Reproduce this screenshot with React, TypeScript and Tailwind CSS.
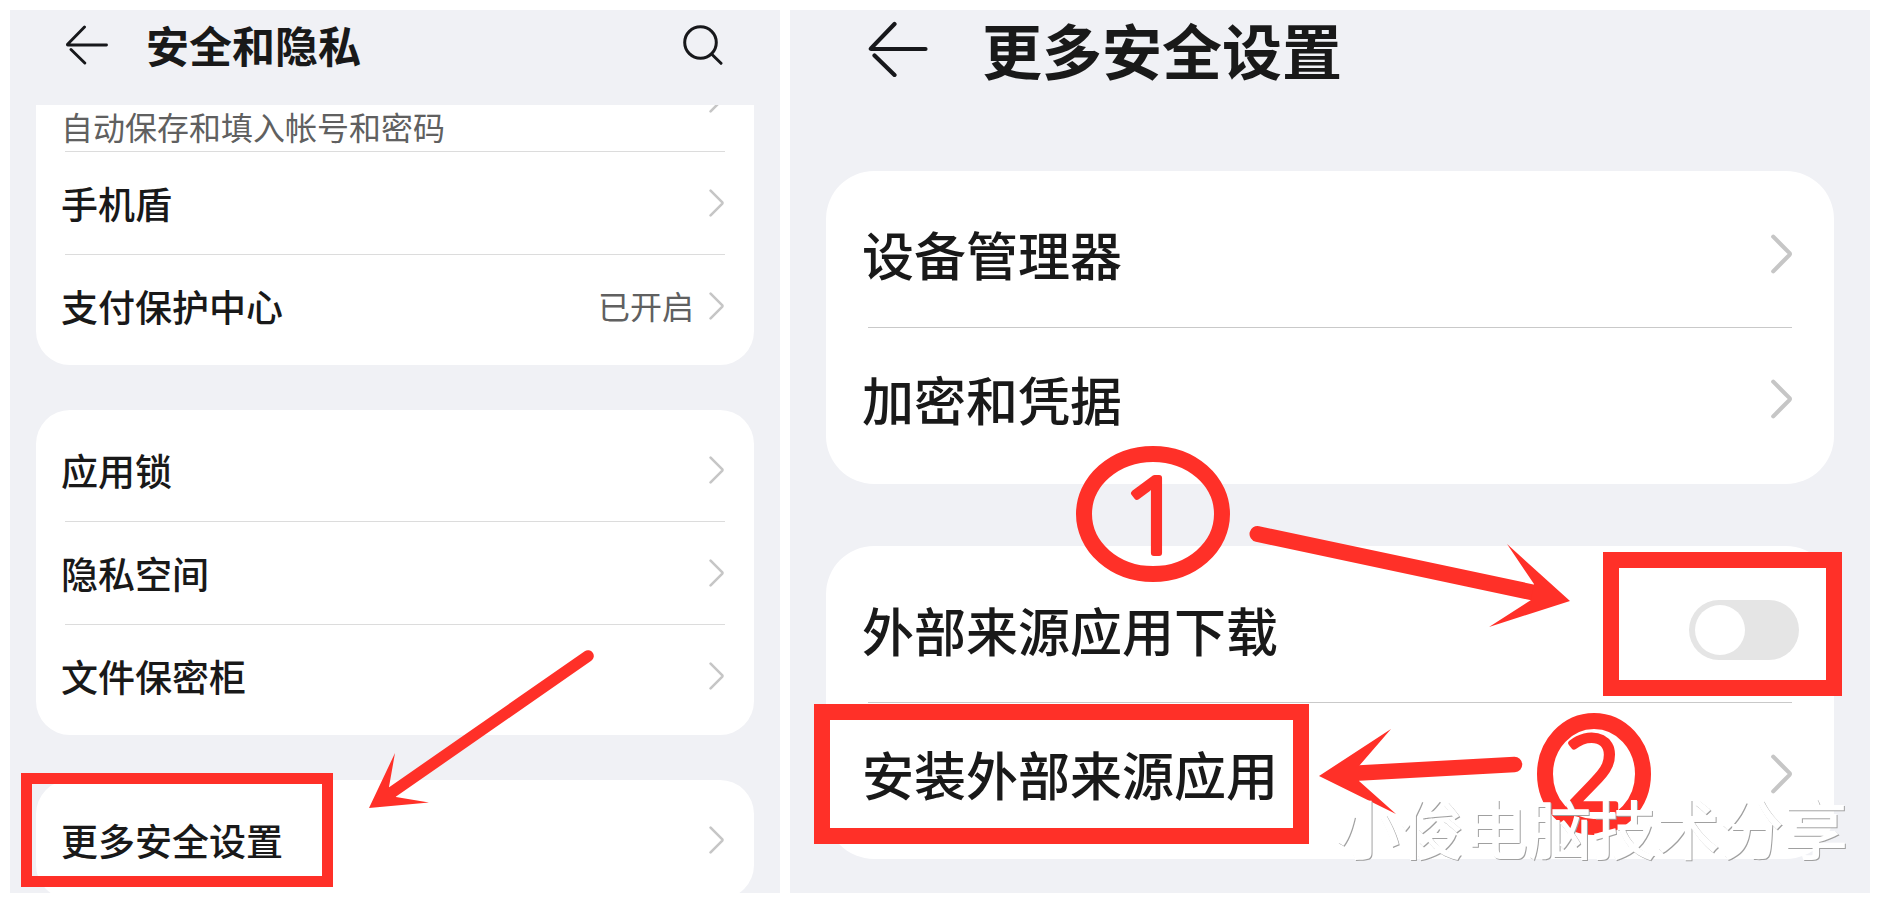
import React from "react";

const RED = "#ff3028";

function Chevron({ large = false }: { large?: boolean }) {
  return (
    <svg
      viewBox="0 0 15 28"
      className={large ? "h-[40px] w-[21px] shrink-0" : "h-[28px] w-[15px] shrink-0"}
      fill="none"
      stroke="#c6c6c6"
      strokeLinecap="round"
      strokeLinejoin="round"
      strokeWidth={large ? 3 : 2.6}
      aria-hidden="true"
    >
      <path d="M1.6 1.6 L13.1 13.2 Q13.8 14 13.1 14.8 L1.6 26.4" />
    </svg>
  );
}

function Row({ label, value }: { label: string; value?: string }) {
  return (
    <button type="button" className="flex h-[102px] w-full items-center pr-[30px] pl-[25px] text-left">
      <span className="flex-1 text-[37px] leading-[54px] font-medium">{label}</span>
      {value && <span className="mr-[15px] pb-[3px] text-[32px] leading-[46px] text-[#606060]">{value}</span>}
      <Chevron />
    </button>
  );
}

function LargeRow({ label }: { label: string }) {
  return (
    <button type="button" className="flex h-[144px] w-full items-center pr-[42px] pb-[2px] pl-[36px] text-left">
      <span className="flex-1 text-[52px] leading-[76px] font-medium">{label}</span>
      <Chevron large />
    </button>
  );
}

function Line() {
  return <hr className="mr-[29px] ml-[29px] border-0 border-t border-[#dcdcdc]" />;
}

function LargeLine() {
  return <hr className="mx-[42px] border-0 border-t border-[#c9c9c9]" />;
}

function SecurityPanel() {
  return (
    <section className="relative flex min-w-0 flex-col overflow-hidden bg-[#f0f1f5]">
      <header className="mb-[26px] flex h-[69px] shrink-0 items-center pr-[57px] pl-[56px]">
        <button type="button" aria-label="返回">
          <svg viewBox="0 0 42 40" className="h-[40px] w-[42px]" fill="none" stroke="#17181b" strokeWidth="2.9" strokeLinecap="round" strokeLinejoin="round">
            <path d="M18.5 2 L1.6 19.2 Q1.2 20 2 20 H40.5" />
            <path d="M5 24.5 L18.8 38" />
          </svg>
        </button>
        <h1 className="ml-[38px] flex-1 pb-[2px] text-[43px] leading-[62px] font-bold">安全和隐私</h1>
        <button type="button" aria-label="搜索">
          <svg viewBox="0 0 40 40" className="h-[40px] w-[40px]" fill="none" stroke="#17181b" strokeWidth="3" strokeLinecap="round">
            <circle cx="17.5" cy="17.5" r="15.8" />
            <path d="M28.5 29 L38 38.3" />
          </svg>
        </button>
      </header>

      <div className="flex min-h-0 flex-1 flex-col gap-[45px] overflow-hidden px-[26px]">
        <div className="shrink-0 overflow-hidden rounded-b-[34px] bg-white pb-2">
          <button type="button" className="flex h-[46px] w-full items-end pr-[30px] pl-[25px] text-left">
            <span className="flex-1 pb-[3px] text-[32px] leading-[43px] text-[#606060]">自动保存和填入帐号和密码</span>
            <span className="pb-[38px]">
              <Chevron />
            </span>
          </button>
          <Line />
          <Row label="手机盾" />
          <Line />
          <Row label="支付保护中心" value="已开启" />
        </div>

        <div className="shrink-0 rounded-[34px] bg-white pt-[9px] pb-2">
          <Row label="应用锁" />
          <Line />
          <Row label="隐私空间" />
          <Line />
          <Row label="文件保密柜" />
        </div>

        <div className="shrink-0 rounded-[34px] bg-white pt-[9px] pb-2">
          <Row label="更多安全设置" />
        </div>
      </div>

      <div className="pointer-events-none absolute top-[763px] left-[11px] h-[114px] w-[312px] border-[11px] border-[#ff3028]" />
      <svg viewBox="369 645 230 170" className="pointer-events-none absolute top-[635px] left-[359px] h-[170px] w-[230px]" aria-hidden="true">
        <path d="M588 656 L391 793" stroke={RED} strokeWidth="11.6" strokeLinecap="round" />
        <path d="M369 808 L395 753 L389 787 L396 797 L429 802.5 Z" fill={RED} />
      </svg>
    </section>
  );
}

function MoreSettingsPanel() {
  return (
    <section className="relative flex min-w-0 flex-col bg-[#f0f1f5]">
      <header className="mb-[83px] flex h-[78px] shrink-0 items-center pl-[78px]">
        <button type="button" aria-label="返回">
          <svg viewBox="0 0 60 56" className="h-[56px] w-[60px]" fill="none" stroke="#17181b" strokeWidth="4.2" strokeLinecap="round" strokeLinejoin="round">
            <path d="M26.5 3 L3 27.4 Q2.4 28 3.4 28 H57.5" />
            <path d="M6.5 34.5 L26.5 54" />
          </svg>
        </button>
        <h2 className="ml-[54px] text-[60px] leading-[78px] font-bold">更多安全设置</h2>
      </header>

      <div className="flex flex-col gap-[62px] px-[36px]">
        <div className="rounded-[48px] bg-white py-3">
          <LargeRow label="设备管理器" />
          <LargeLine />
          <LargeRow label="加密和凭据" />
        </div>

        <div className="rounded-[48px] bg-white py-3">
          <label className="flex h-[144px] items-center pr-[35px] pl-[36px]">
            <span className="flex-1 text-[52px] leading-[76px] font-medium">外部来源应用下载</span>
            <input
              type="checkbox"
              role="switch"
              className="h-[60px] w-[110px] shrink-0 appearance-none rounded-full bg-[#e5e5e5] py-[5px] pl-[6px] before:block before:size-[50px] before:rounded-full before:bg-white checked:bg-[#0a59f7] checked:before:ml-[48px]"
            />
          </label>
          <LargeLine />
          <LargeRow label="安装外部来源应用" />
        </div>
      </div>

      <div className="pointer-events-none absolute top-[542px] right-[28px] h-[144px] w-[239px] border-[16px] border-[#ff3028]" />
      <div className="pointer-events-none absolute top-[694px] left-[24px] h-[140px] w-[495px] border-[16px] border-[#ff3028]" />

      <svg viewBox="0 0 154 136" className="pointer-events-none absolute top-[436px] left-[286px] h-[136px] w-[154px] overflow-visible font-['Open_Sans',sans-serif]">
        <ellipse cx="77" cy="68" rx="69" ry="60" fill="none" stroke={RED} strokeWidth="16" />
        <text x="78" y="107" textAnchor="middle" fontSize="106" fontWeight="300" fill={RED} stroke={RED} strokeWidth="6" strokeLinejoin="round">1</text>
      </svg>
      <svg viewBox="0 0 114 122" className="pointer-events-none absolute top-[703px] right-[219px] h-[122px] w-[114px] overflow-visible font-['Open_Sans',sans-serif]">
        <ellipse cx="57" cy="61" rx="49" ry="53" fill="none" stroke={RED} strokeWidth="16" />
        <text x="56" y="96" textAnchor="middle" fontSize="102" fontWeight="300" fill={RED} stroke={RED} strokeWidth="6" strokeLinejoin="round">2</text>
      </svg>

      <svg viewBox="1245 520 330 115" className="pointer-events-none absolute top-[510px] left-[455px] h-[115px] w-[330px]" aria-hidden="true">
        <path d="M1257.5 534 L1540 594" stroke={RED} strokeWidth="16" strokeLinecap="round" />
        <path d="M1570 601 L1507 544 L1534 584 L1531 600 L1489 627 Z" fill={RED} />
      </svg>
      <svg viewBox="1315 725 215 95" className="pointer-events-none absolute top-[715px] left-[525px] h-[95px] w-[215px]" aria-hidden="true">
        <path d="M1514.5 764.5 L1350 773.5" stroke={RED} strokeWidth="15.5" strokeLinecap="round" />
        <path d="M1319 776 L1391 729 L1359 766 V781 L1396 814 Z" fill={RED} />
      </svg>

      <p className="pointer-events-none absolute right-[22px] bottom-[20px] text-[64px] leading-[94px] font-medium whitespace-nowrap text-white [text-shadow:1px_1px_0_#a0a0a0]">
        小俊电脑技术分享
      </p>
    </section>
  );
}

export default function App() {
  return (
    <main className="grid h-screen grid-cols-[77fr_108fr] gap-[10px] overflow-hidden bg-white px-[10px] pt-[10px] pb-[11px] font-['Noto_Sans_CJK_SC',sans-serif] text-[#191919]">
      <SecurityPanel />
      <MoreSettingsPanel />
    </main>
  );
}
